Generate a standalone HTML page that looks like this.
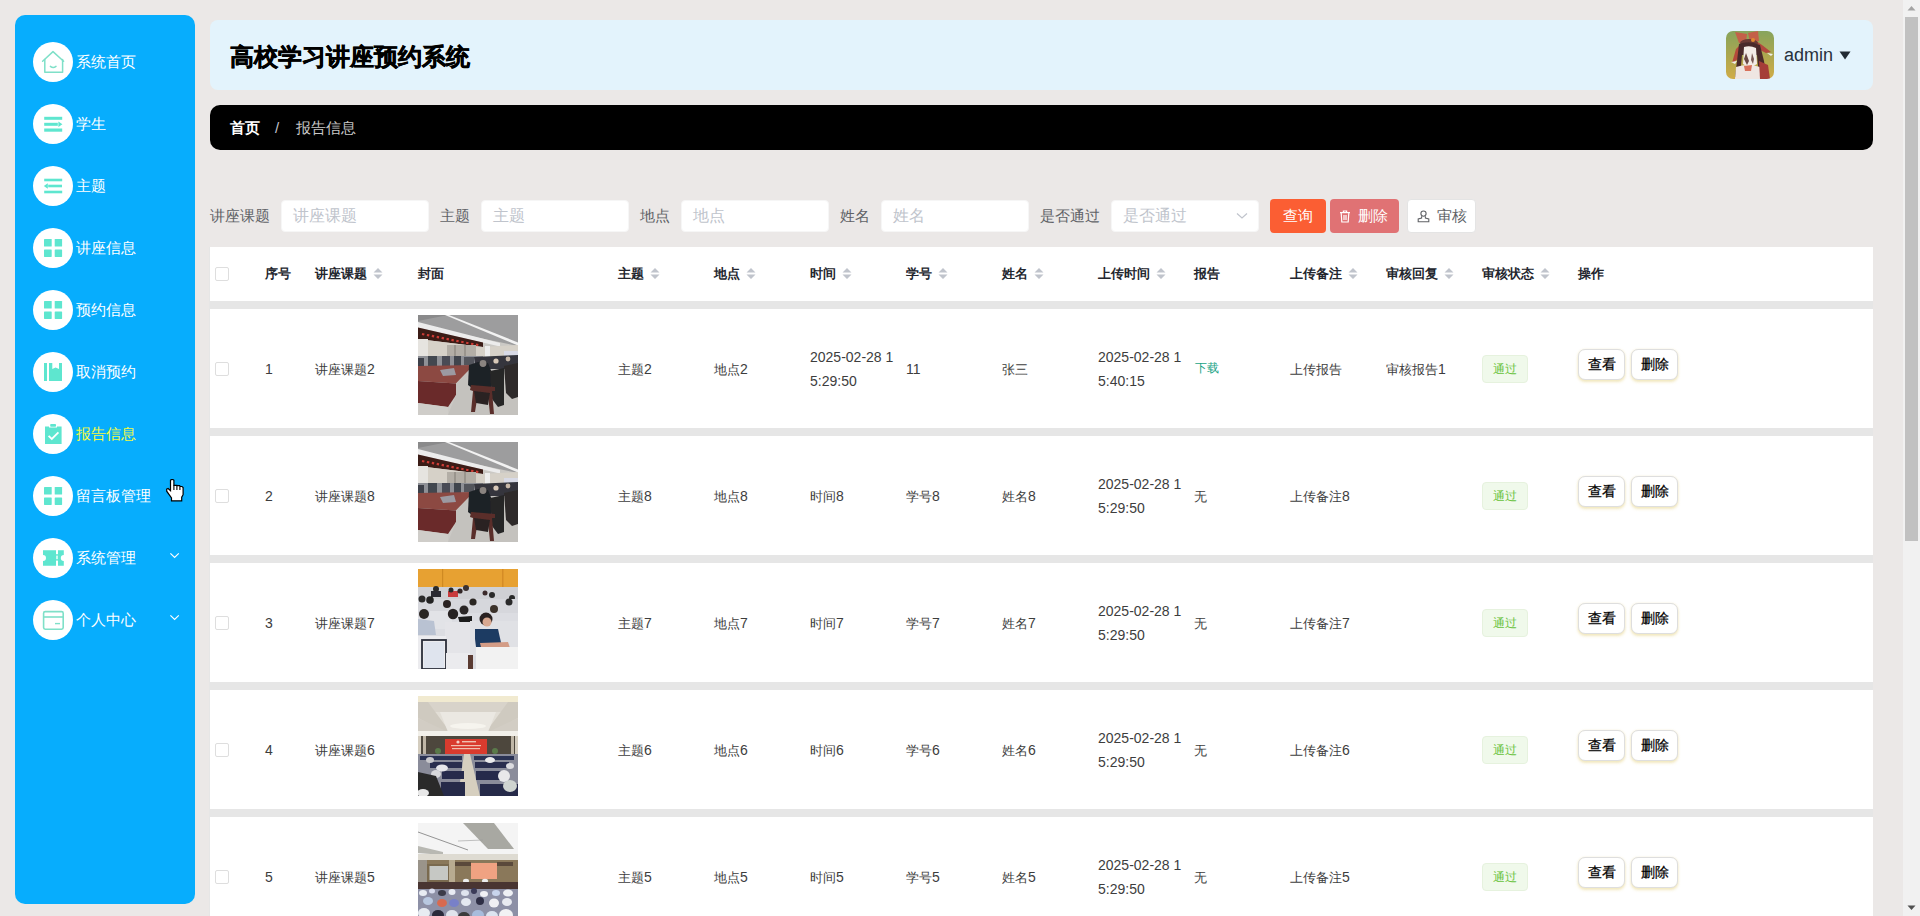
<!DOCTYPE html>
<html><head><meta charset="utf-8">
<style>
*{box-sizing:border-box;margin:0;padding:0}
html,body{width:1920px;height:916px;overflow:hidden}
body{background:#ebe8e7;font-family:"Liberation Sans",sans-serif;position:relative;color:#606266}
.abs{position:absolute}
#side{position:absolute;left:15px;top:15px;width:180px;height:889px;background:#07adfd;border-radius:10px}
.mi{position:absolute;left:18px;height:40px;width:160px}
.mi .ic{position:absolute;left:0;top:0;width:40px;height:40px;border-radius:50%;background:#fff}
.mi .ic svg{position:absolute;left:0;top:0}
.mi .tx{position:absolute;left:43px;top:0;line-height:40px;font-size:15px;color:#fff;white-space:nowrap}
.mi .tx.on{color:#f3fa3f}
.chev{position:absolute;left:136px;top:14px}
#hdr{position:absolute;left:210px;top:20px;width:1663px;height:70px;background:#e3f3fc;border-radius:8px}
#title{position:absolute;left:20px;top:1.5px;-webkit-text-stroke:0.5px #000;line-height:70px;font-size:24px;font-weight:bold;color:#000;white-space:nowrap}
#bc{position:absolute;left:210px;top:105px;width:1663px;height:45px;background:#000;border-radius:10px}
#bc span{position:absolute;top:0;line-height:45px;font-size:15px;white-space:nowrap}
.lbl{position:absolute;top:200px;line-height:32px;font-size:15px;color:#606266;white-space:nowrap}
.inp{position:absolute;top:200px;height:32px;width:148px;background:#fff;border:1px solid #f6f6f6;border-radius:4px}
.inp span{position:absolute;left:11px;top:0;line-height:29px;font-size:16px;color:#c0c4cc;white-space:nowrap}
.btn{position:absolute;top:199px;height:34px;border-radius:4px;font-size:15px;line-height:34px;white-space:nowrap;text-align:center}
#thead{position:absolute;left:210px;top:247px;width:1663px;height:54px;background:#fff}
.th{position:absolute;top:0;line-height:54px;font-size:13px;font-weight:bold;color:#23262e;white-space:nowrap}
.sort{display:inline-block;vertical-align:middle;margin-left:6px;width:10px;height:13px;position:relative;top:-1px}
.row{position:absolute;left:210px;width:1663px;height:119px;background:#fff}
.td{position:absolute;font-size:13px;color:#3d3d3d;white-space:nowrap}
.n{font-size:14px;line-height:1px}
.cb{position:absolute;left:5px;width:14px;height:14px;border:1px solid #dedede;border-radius:2px;background:#fff}
.tag{position:absolute;left:1272px;width:46px;height:28px;background:#f0f9eb;border:1px solid #e6f2de;border-radius:4px;color:#67c23a;font-size:12px;line-height:26px;text-align:center}
.ob{position:absolute;width:47px;height:31px;border:1px solid #dedede;border-radius:7px;background:#fff;font-size:14px;color:#000;text-align:center;line-height:29px;box-shadow:0 2px 3px rgba(238,224,170,.75),0 0 2px rgba(240,232,200,.6);-webkit-text-stroke:0.25px #000}
.thumb{position:absolute;left:208px;width:100px;height:100px;overflow:hidden}
#sb{position:absolute;left:1903px;top:0;width:17px;height:916px;background:#f1f1f1}
</style></head><body>
<svg width="0" height="0" style="position:absolute"><defs><filter id="bl" x="0" y="0" width="1" height="1"><feGaussianBlur stdDeviation="0.45"/></filter><filter id="bl2" x="0" y="0" width="1" height="1"><feGaussianBlur stdDeviation="0.7"/></filter></defs></svg>

<div id="side">
<div class="mi" style="top:27px"><div class="ic"><svg width="40" height="40" viewBox="0 0 40 40"><g fill="none" stroke="#7fe0c8" stroke-width="1.5" stroke-linejoin="round" stroke-linecap="round"><path d="M9.6 19.2 L20 9.6 L30.6 19.2"/><path d="M11.8 17.6 V30.2 H29.6 V17.6"/><path d="M17.4 24.4 Q20.2 26.6 23 24.4"/></g></svg></div><div class="tx">系统首页</div></div>
<div class="mi" style="top:89px"><div class="ic"><svg width="40" height="40" viewBox="0 0 40 40"><g fill="#5ee6cf"><rect x="11.2" y="12.8" width="18" height="3"/><rect x="11.2" y="18.8" width="13.6" height="3"/><path d="M25.4 17.6 L29.4 20.3 L25.4 23Z"/><rect x="11.2" y="24.5" width="18" height="3.2"/></g></svg></div><div class="tx">学生</div></div>
<div class="mi" style="top:151px"><div class="ic"><svg width="40" height="40" viewBox="0 0 40 40"><g fill="#5ee6cf"><rect x="11.2" y="12.7" width="18" height="2.6"/><path d="M10.8 20 L14.8 17.2 L14.8 22.8Z"/><rect x="15.2" y="18.7" width="13.8" height="2.6"/><rect x="11.2" y="24.7" width="18" height="2.6"/></g></svg></div><div class="tx">主题</div></div>
<div class="mi" style="top:213px"><div class="ic"><svg width="40" height="40" viewBox="0 0 40 40"><g fill="#5ee6cf"><rect x="11" y="11" width="7.7" height="7.5" rx=".6"/><rect x="21.7" y="11" width="7.4" height="7.5" rx=".6"/><rect x="11" y="21.5" width="7.7" height="7.4" rx=".6"/><rect x="21.7" y="21.5" width="7.4" height="7.4" rx=".6"/></g></svg></div><div class="tx">讲座信息</div></div>
<div class="mi" style="top:275px"><div class="ic"><svg width="40" height="40" viewBox="0 0 40 40"><g fill="#5ee6cf"><rect x="11" y="11" width="7.7" height="7.5" rx=".6"/><rect x="21.7" y="11" width="7.4" height="7.5" rx=".6"/><rect x="11" y="21.5" width="7.7" height="7.4" rx=".6"/><rect x="21.7" y="21.5" width="7.4" height="7.4" rx=".6"/></g></svg></div><div class="tx">预约信息</div></div>
<div class="mi" style="top:337px"><div class="ic"><svg width="40" height="40" viewBox="0 0 40 40"><g fill="#5ee6cf"><rect x="11" y="11" width="3" height="18"/><path d="M16 11 H19.3 V17 L22.6 15.6 L26 17 V11 H29 V29 H16Z"/></g></svg></div><div class="tx">取消预约</div></div>
<div class="mi" style="top:399px"><div class="ic"><svg width="40" height="40" viewBox="0 0 40 40"><g fill="#5ee6cf"><rect x="17.2" y="10" width="5.8" height="2.8" rx=".8"/><path d="M12 12.6 H16 V13.6 H24 V12.6 H28.6 V30 H12Z"/><path d="M15.6 21.8 L18.8 25 L25.4 18.4" fill="none" stroke="#fff" stroke-width="1.8"/></g></svg></div><div class="tx on">报告信息</div></div>
<div class="mi" style="top:461px"><div class="ic"><svg width="40" height="40" viewBox="0 0 40 40"><g fill="#5ee6cf"><rect x="11" y="11" width="7.7" height="7.5" rx=".6"/><rect x="21.7" y="11" width="7.4" height="7.5" rx=".6"/><rect x="11" y="21.5" width="7.7" height="7.4" rx=".6"/><rect x="21.7" y="21.5" width="7.4" height="7.4" rx=".6"/></g></svg></div><div class="tx">留言板管理</div></div>
<div class="mi" style="top:523px"><div class="ic"><svg width="40" height="40" viewBox="0 0 40 40"><g fill="#5ee6cf"><path d="M10 12.2 H30.8 V16.9 A3 3 0 0 0 30.8 22.9 V27.7 H10 V22.9 A3 3 0 0 0 10 16.9Z"/><rect x="23" y="12" width="2" height="4.2" fill="#fff"/><rect x="23" y="22.6" width="2" height="5.4" fill="#fff"/><rect x="23" y="17.6" width="2" height="3.6" fill="#fff" opacity=".7"/></g></svg></div><div class="tx">系统管理</div><svg class="chev" width="12" height="8" viewBox="0 0 12 8"><path d="M1.4 1.4 L5.6 5.4 L9.8 1.4" fill="none" stroke="#fff" stroke-width="1.2"/></svg></div>
<div class="mi" style="top:585px"><div class="ic"><svg width="40" height="40" viewBox="0 0 40 40"><g fill="none" stroke="#7fe0c8" stroke-width="1.6"><rect x="10.6" y="11.6" width="19.6" height="17.6" rx="1.6"/><path d="M10.6 17 H30.2"/><path d="M22 23.6 H27" stroke-width="1.4"/></g></svg></div><div class="tx">个人中心</div><svg class="chev" width="12" height="8" viewBox="0 0 12 8"><path d="M1.4 1.4 L5.6 5.4 L9.8 1.4" fill="none" stroke="#fff" stroke-width="1.2"/></svg></div>
</div>

<div id="hdr"><div id="title">高校学习讲座预约系统</div></div>
<div id="bc"><span style="left:20px;color:#fff;font-weight:bold">首页</span><span style="left:65px;color:#c0c4cc">/</span><span style="left:86px;color:#c8c8c8">报告信息</span></div>


<div class="abs" style="left:209px;top:247px;width:1664px;height:669px;background:#e6e6e6"></div>
<div class="lbl" style="left:210px">讲座课题</div><div class="inp" style="left:281px"><span>讲座课题</span></div>
<div class="lbl" style="left:440px">主题</div><div class="inp" style="left:481px"><span>主题</span></div>
<div class="lbl" style="left:640px">地点</div><div class="inp" style="left:681px"><span>地点</span></div>
<div class="lbl" style="left:840px">姓名</div><div class="inp" style="left:881px"><span>姓名</span></div>
<div class="lbl" style="left:1040px">是否通过</div><div class="inp" style="left:1111px"><span>是否通过</span><svg style="position:absolute;left:124px;top:11px" width="12" height="8" viewBox="0 0 12 8"><path d="M1 1.5 L6 6 L11 1.5" fill="none" stroke="#c0c4cc" stroke-width="1.2"/></svg></div>
<div class="btn" style="left:1270px;width:56px;background:#fb5e33;color:#fff">查询</div>
<div class="btn" style="left:1330px;width:69px;background:#e07274;color:#fff"><svg style="position:absolute;left:9px;top:11px" width="12" height="13" viewBox="0 0 12 13"><g fill="none" stroke="#fff" stroke-width="1.2"><path d="M1 2.6 H11"/><path d="M4.4 2.4 V1 H7.6 V2.4"/><path d="M2.2 3 L2.8 12 H9.2 L9.8 3"/><path d="M5 5 V10 M7 5 V10"/></g></svg><span style="position:absolute;left:28px">删除</span></div>
<div class="btn" style="left:1407px;width:69px;background:#fff;border:1px solid #e4e4e4;color:#606266;line-height:32px"><svg style="position:absolute;left:9px;top:10px" width="13" height="13" viewBox="0 0 13 13"><g fill="none" stroke="#606266" stroke-width="1.1"><circle cx="6.5" cy="3.6" r="2.6"/><path d="M4.6 6.2 L4.6 8 L1.2 9 V11.8 H11.8 V9 L8.4 8 V6.2"/></g></svg><span style="position:absolute;left:29px">审核</span></div>
<div id="thead"><div class="cb" style="top:20px"></div><div class="th" style="left:55px">序号</div><div class="th" style="left:105px">讲座课题<svg class="sort" viewBox="0 0 10 12"><path d="M5 0.5 L9.5 5 H0.5Z M5 11.5 L9.5 7 H0.5Z" fill="#c0c4cc"/></svg></div><div class="th" style="left:208px">封面</div><div class="th" style="left:408px">主题<svg class="sort" viewBox="0 0 10 12"><path d="M5 0.5 L9.5 5 H0.5Z M5 11.5 L9.5 7 H0.5Z" fill="#c0c4cc"/></svg></div><div class="th" style="left:504px">地点<svg class="sort" viewBox="0 0 10 12"><path d="M5 0.5 L9.5 5 H0.5Z M5 11.5 L9.5 7 H0.5Z" fill="#c0c4cc"/></svg></div><div class="th" style="left:600px">时间<svg class="sort" viewBox="0 0 10 12"><path d="M5 0.5 L9.5 5 H0.5Z M5 11.5 L9.5 7 H0.5Z" fill="#c0c4cc"/></svg></div><div class="th" style="left:696px">学号<svg class="sort" viewBox="0 0 10 12"><path d="M5 0.5 L9.5 5 H0.5Z M5 11.5 L9.5 7 H0.5Z" fill="#c0c4cc"/></svg></div><div class="th" style="left:792px">姓名<svg class="sort" viewBox="0 0 10 12"><path d="M5 0.5 L9.5 5 H0.5Z M5 11.5 L9.5 7 H0.5Z" fill="#c0c4cc"/></svg></div><div class="th" style="left:888px">上传时间<svg class="sort" viewBox="0 0 10 12"><path d="M5 0.5 L9.5 5 H0.5Z M5 11.5 L9.5 7 H0.5Z" fill="#c0c4cc"/></svg></div><div class="th" style="left:984px">报告</div><div class="th" style="left:1080px">上传备注<svg class="sort" viewBox="0 0 10 12"><path d="M5 0.5 L9.5 5 H0.5Z M5 11.5 L9.5 7 H0.5Z" fill="#c0c4cc"/></svg></div><div class="th" style="left:1176px">审核回复<svg class="sort" viewBox="0 0 10 12"><path d="M5 0.5 L9.5 5 H0.5Z M5 11.5 L9.5 7 H0.5Z" fill="#c0c4cc"/></svg></div><div class="th" style="left:1272px">审核状态<svg class="sort" viewBox="0 0 10 12"><path d="M5 0.5 L9.5 5 H0.5Z M5 11.5 L9.5 7 H0.5Z" fill="#c0c4cc"/></svg></div><div class="th" style="left:1368px">操作</div></div>
<div class="row" style="top:309px"><div class="cb" style="top:53px"></div><div class="td" style="left:55px;top:48.5px;line-height:24px"><span class="n">1</span></div><div class="td" style="left:105px;top:48.5px;line-height:24px">讲座课题<span class="n">2</span></div><div class="thumb" style="top:6px"><svg width="100" height="100" viewBox="0 0 100 100" preserveAspectRatio="none"><g filter="url(#bl)">
<rect width="100" height="100" fill="#cbc9c5"/>
<polygon points="0,0 100,0 100,31 0,10" fill="#9d9d9e"/>
<polygon points="0,0 30,0 0,6" fill="#8a8a8b"/>
<polygon points="27,0 31,0 100,27.5 100,30.5" fill="#f2f2f2"/>
<polygon points="0,7 82,28 82,31.5 0,12.5" fill="#ececec"/>
<polygon points="0,12.5 65,27.4 65,32 0,24" fill="#3b1a17"/>
<line x1="4" y1="19" x2="62" y2="30.5" stroke="#cc3c34" stroke-width="2.2" stroke-dasharray="2.4 2.6"/>
<polygon points="0,24 65,32 100,30 100,42 0,42" fill="#d6d1c8"/>
<rect x="0" y="24" width="10" height="34" fill="#e6e4e0"/>
<rect x="29" y="30" width="29" height="12" fill="#b3aea6"/>
<rect x="36" y="30" width="2" height="12" fill="#9a958d"/><rect x="46" y="30" width="2" height="12" fill="#9a958d"/>
<rect x="67" y="31" width="5" height="12" fill="#eeeeee"/>
<rect x="86" y="36" width="14" height="6" fill="#d8dae6"/>
<rect x="0" y="41" width="65" height="12" fill="#8e9096"/>
<rect x="0" y="43" width="6" height="10" fill="#3d414a"/>
<rect x="10" y="41" width="9" height="11" fill="#434750"/>
<rect x="24" y="41" width="8" height="10" fill="#484c55"/>
<rect x="36" y="41" width="7" height="10" fill="#40444d"/>
<rect x="46" y="42" width="10" height="8" fill="#52555c"/>
<polygon points="0,51 56,50 38,68.5 0,66" fill="#8c4842"/>
<polygon points="22,55 36,53 38,60 25,61" fill="#9c9aa2"/>
<polygon points="0,66 38,68.5 38,80 30,92 0,88" fill="#6a2b2a"/>
<polygon points="38,68.5 56,50 100,50 100,100 30,100 38,80" fill="#c4c2be"/>
<polygon points="56,42 100,40 100,54 58,54" fill="#34363c"/>
<circle cx="78" cy="46" r="2.6" fill="#d8c8b8"/><circle cx="90" cy="44" r="2.4" fill="#c8b8a8"/>
<polygon points="51,50 60,47 70,48 74,58 73,74 58,76 50,70" fill="#1f2126"/>
<circle cx="65" cy="48.5" r="3.4" fill="#8a8480"/>
<polygon points="72,56 86,53 86,90 80,92 74,84" fill="#272628"/>
<polygon points="86,51 100,48 100,82 94,84 88,78" fill="#2e2b2b"/>
<polygon points="53,70 77,72 77,76 74,76 76,99 72,99 70,80 60,78 57,97 53,97 55,76 52,75" fill="#5a2f2a"/>
<polygon points="56,76 72,78 70,90 58,88" fill="#2a2324"/>
<polygon points="0,88 30,92 30,100 0,100" fill="#cfcdc9"/>
</g></svg></div><div class="td" style="left:408px;top:48.5px;line-height:24px">主题<span class="n">2</span></div><div class="td" style="left:504px;top:48.5px;line-height:24px">地点<span class="n">2</span></div><div class="td" style="left:600px;top:36.5px;line-height:24px"><span class="n">2025-02-28 1</span><br><span class="n">5:29:50</span></div><div class="td" style="left:696px;top:48.5px;line-height:24px"><span class="n">11</span></div><div class="td" style="left:792px;top:48.5px;line-height:24px">张三</div><div class="td" style="left:888px;top:36.5px;line-height:24px"><span class="n">2025-02-28 1</span><br><span class="n">5:40:15</span></div><div class="td" style="left:985px;top:47px;line-height:24px;color:#19a385;font-size:12px">下载</div><div class="td" style="left:1080px;top:48.5px;line-height:24px">上传报告</div><div class="td" style="left:1176px;top:48.5px;line-height:24px">审核报告<span class="n">1</span></div><div class="tag" style="top:46px">通过</div><div class="ob" style="left:1368px;top:40px">查看</div><div class="ob" style="left:1421px;top:40px">删除</div></div>
<div class="row" style="top:436px"><div class="cb" style="top:53px"></div><div class="td" style="left:55px;top:48.5px;line-height:24px"><span class="n">2</span></div><div class="td" style="left:105px;top:48.5px;line-height:24px">讲座课题<span class="n">8</span></div><div class="thumb" style="top:6px"><svg width="100" height="100" viewBox="0 0 100 100" preserveAspectRatio="none"><g filter="url(#bl)">
<rect width="100" height="100" fill="#cbc9c5"/>
<polygon points="0,0 100,0 100,31 0,10" fill="#9d9d9e"/>
<polygon points="0,0 30,0 0,6" fill="#8a8a8b"/>
<polygon points="27,0 31,0 100,27.5 100,30.5" fill="#f2f2f2"/>
<polygon points="0,7 82,28 82,31.5 0,12.5" fill="#ececec"/>
<polygon points="0,12.5 65,27.4 65,32 0,24" fill="#3b1a17"/>
<line x1="4" y1="19" x2="62" y2="30.5" stroke="#cc3c34" stroke-width="2.2" stroke-dasharray="2.4 2.6"/>
<polygon points="0,24 65,32 100,30 100,42 0,42" fill="#d6d1c8"/>
<rect x="0" y="24" width="10" height="34" fill="#e6e4e0"/>
<rect x="29" y="30" width="29" height="12" fill="#b3aea6"/>
<rect x="36" y="30" width="2" height="12" fill="#9a958d"/><rect x="46" y="30" width="2" height="12" fill="#9a958d"/>
<rect x="67" y="31" width="5" height="12" fill="#eeeeee"/>
<rect x="86" y="36" width="14" height="6" fill="#d8dae6"/>
<rect x="0" y="41" width="65" height="12" fill="#8e9096"/>
<rect x="0" y="43" width="6" height="10" fill="#3d414a"/>
<rect x="10" y="41" width="9" height="11" fill="#434750"/>
<rect x="24" y="41" width="8" height="10" fill="#484c55"/>
<rect x="36" y="41" width="7" height="10" fill="#40444d"/>
<rect x="46" y="42" width="10" height="8" fill="#52555c"/>
<polygon points="0,51 56,50 38,68.5 0,66" fill="#8c4842"/>
<polygon points="22,55 36,53 38,60 25,61" fill="#9c9aa2"/>
<polygon points="0,66 38,68.5 38,80 30,92 0,88" fill="#6a2b2a"/>
<polygon points="38,68.5 56,50 100,50 100,100 30,100 38,80" fill="#c4c2be"/>
<polygon points="56,42 100,40 100,54 58,54" fill="#34363c"/>
<circle cx="78" cy="46" r="2.6" fill="#d8c8b8"/><circle cx="90" cy="44" r="2.4" fill="#c8b8a8"/>
<polygon points="51,50 60,47 70,48 74,58 73,74 58,76 50,70" fill="#1f2126"/>
<circle cx="65" cy="48.5" r="3.4" fill="#8a8480"/>
<polygon points="72,56 86,53 86,90 80,92 74,84" fill="#272628"/>
<polygon points="86,51 100,48 100,82 94,84 88,78" fill="#2e2b2b"/>
<polygon points="53,70 77,72 77,76 74,76 76,99 72,99 70,80 60,78 57,97 53,97 55,76 52,75" fill="#5a2f2a"/>
<polygon points="56,76 72,78 70,90 58,88" fill="#2a2324"/>
<polygon points="0,88 30,92 30,100 0,100" fill="#cfcdc9"/>
</g></svg></div><div class="td" style="left:408px;top:48.5px;line-height:24px">主题<span class="n">8</span></div><div class="td" style="left:504px;top:48.5px;line-height:24px">地点<span class="n">8</span></div><div class="td" style="left:600px;top:48.5px;line-height:24px">时间<span class="n">8</span></div><div class="td" style="left:696px;top:48.5px;line-height:24px">学号<span class="n">8</span></div><div class="td" style="left:792px;top:48.5px;line-height:24px">姓名<span class="n">8</span></div><div class="td" style="left:888px;top:36.5px;line-height:24px"><span class="n">2025-02-28 1</span><br><span class="n">5:29:50</span></div><div class="td" style="left:984px;top:48.5px;line-height:24px">无</div><div class="td" style="left:1080px;top:48.5px;line-height:24px">上传备注<span class="n">8</span></div><div class="tag" style="top:46px">通过</div><div class="ob" style="left:1368px;top:40px">查看</div><div class="ob" style="left:1421px;top:40px">删除</div></div>
<div class="row" style="top:563px"><div class="cb" style="top:53px"></div><div class="td" style="left:55px;top:48.5px;line-height:24px"><span class="n">3</span></div><div class="td" style="left:105px;top:48.5px;line-height:24px">讲座课题<span class="n">7</span></div><div class="thumb" style="top:6px"><svg width="100" height="100" viewBox="0 0 100 100" preserveAspectRatio="none"><g filter="url(#bl)">
<rect width="100" height="100" fill="#dcdde2"/>
<rect width="100" height="24" fill="#e7a132"/>
<rect x="24" y="0" width="1.2" height="20" fill="#cf8a24"/>
<rect x="84" y="0" width="1.5" height="25" fill="#d58c25"/>
<rect x="0" y="18" width="100" height="14" fill="#cfd0d4"/>
<circle cx="18" cy="20" r="3" fill="#2a2a2c"/><rect x="13" y="22" width="10" height="6" fill="#2b2b30"/>
<rect x="30" y="22" width="10" height="6" fill="#c83a3c"/><circle cx="33" cy="21" r="2.5" fill="#2a2a2a"/>
<circle cx="48" cy="19" r="3" fill="#3a3030"/><circle cx="42" cy="22" r="2.6" fill="#302828"/>
<circle cx="74" cy="26" r="3" fill="#2a2a2a"/><circle cx="67" cy="24" r="2.5" fill="#3a2a2a"/>
<circle cx="94" cy="29" r="3" fill="#2a2a2a"/>
<rect x="0" y="30" width="100" height="14" fill="#d6d7dc"/>
<circle cx="12" cy="31" r="3.8" fill="#222"/><circle cx="4" cy="30" r="3.5" fill="#2a2a2a"/>
<circle cx="29" cy="35" r="4" fill="#2a2420"/><circle cx="55" cy="33" r="3.6" fill="#2c2624"/>
<circle cx="76" cy="40" r="4" fill="#3a302a"/><circle cx="91" cy="33" r="3.5" fill="#2a2a2a"/>
<rect x="12" y="42" width="22" height="18" fill="#e2e3e7"/>
<circle cx="6" cy="45" r="5" fill="#2a2624"/>
<polygon points="0,50 16,52 18,66 0,66" fill="#b9c2d2"/>
<circle cx="35" cy="45" r="5.2" fill="#262220"/>
<circle cx="46" cy="41" r="4.5" fill="#2a2826"/>
<polygon points="40,48 54,47 54,54 42,55" fill="#1a1a1a"/>
<polygon points="27,55 40,54 40,58 28,60" fill="#2a2a2a"/>
<rect x="27" y="53" width="26" height="40" fill="#e4e4e8"/>
<rect x="52" y="52" width="48" height="35" fill="#e0e1e5"/>
<circle cx="68" cy="50" r="6.5" fill="#2a2220"/>
<circle cx="69" cy="53" r="4.5" fill="#d8a890"/>
<polygon points="57,60 80,60 84,78 76,80 58,78 57,70" fill="#1e3a62"/>
<polygon points="62,74 90,73 92,79 64,82" fill="#d39c86"/>
<rect x="0" y="67" width="28" height="33" fill="#ececef"/>
<rect x="4" y="71" width="24" height="29" fill="none" stroke="#2a2e3a" stroke-width="1.8"/>
<rect x="6" y="73" width="20" height="26" fill="#dfe4ee"/>
<rect x="28" y="84" width="24" height="16" fill="#ebebee"/>
<rect x="50" y="86" width="5" height="14" fill="#5a3a30"/>
<rect x="58" y="78" width="42" height="22" fill="#f2f2f2"/>
</g></svg></div><div class="td" style="left:408px;top:48.5px;line-height:24px">主题<span class="n">7</span></div><div class="td" style="left:504px;top:48.5px;line-height:24px">地点<span class="n">7</span></div><div class="td" style="left:600px;top:48.5px;line-height:24px">时间<span class="n">7</span></div><div class="td" style="left:696px;top:48.5px;line-height:24px">学号<span class="n">7</span></div><div class="td" style="left:792px;top:48.5px;line-height:24px">姓名<span class="n">7</span></div><div class="td" style="left:888px;top:36.5px;line-height:24px"><span class="n">2025-02-28 1</span><br><span class="n">5:29:50</span></div><div class="td" style="left:984px;top:48.5px;line-height:24px">无</div><div class="td" style="left:1080px;top:48.5px;line-height:24px">上传备注<span class="n">7</span></div><div class="tag" style="top:46px">通过</div><div class="ob" style="left:1368px;top:40px">查看</div><div class="ob" style="left:1421px;top:40px">删除</div></div>
<div class="row" style="top:690px"><div class="cb" style="top:53px"></div><div class="td" style="left:55px;top:48.5px;line-height:24px"><span class="n">4</span></div><div class="td" style="left:105px;top:48.5px;line-height:24px">讲座课题<span class="n">6</span></div><div class="thumb" style="top:6px"><svg width="100" height="100" viewBox="0 0 100 100" preserveAspectRatio="none"><g filter="url(#bl)">
<rect width="100" height="100" fill="#e2ded6"/>
<rect width="100" height="6" fill="#f1ead0"/>
<polygon points="0,6 100,6 100,16 0,16" fill="#d8d3ca"/>
<polygon points="0,6 10,6 32,36 26,36 0,22" fill="#cfcac0"/>
<polygon points="100,6 90,6 68,36 74,36 100,22" fill="#cfcac0"/>
<polygon points="22,16 78,16 70,36 30,36" fill="#ebe8e2"/>
<ellipse cx="50" cy="30" rx="18" ry="3" fill="#f6f4ee"/>
<polygon points="0,22 30,36 0,36" fill="#d2cdc4"/>
<polygon points="100,22 70,36 100,36" fill="#d2cdc4"/>
<rect x="0" y="35" width="100" height="6" fill="#f2f0ea"/>
<rect x="0" y="40" width="100" height="19" fill="#4e463e"/>
<rect x="0" y="40" width="3" height="20" fill="#d4cdbf"/><rect x="5" y="40" width="3" height="20" fill="#bfb6a6"/>
<rect x="93" y="40" width="3" height="20" fill="#bfb6a6"/><rect x="97" y="40" width="3" height="20" fill="#d4cdbf"/>
<rect x="27" y="43" width="42" height="15" fill="#d93b2f"/>
<circle cx="40" cy="46" r="1.6" fill="#f4d0c8"/>
<rect x="44" y="45" width="14" height="1.4" fill="#f0c0b0"/>
<rect x="33" y="49" width="30" height="1.2" fill="#f0c0b0"/>
<rect x="34" y="52" width="28" height="1.2" fill="#f0c0b0"/>
<circle cx="20" cy="55" r="3" fill="#5a7a4a"/><circle cx="77" cy="55" r="3" fill="#5a7a4a"/>
<rect x="0" y="58" width="100" height="42" fill="#8a8c9a"/>
<polygon points="46,58 52,58 62,100 40,100" fill="#d6cfbf"/>
<rect x="2" y="60" width="42" height="4" fill="#2c3052"/>
<rect x="56" y="60" width="40" height="4" fill="#2c3052"/>
<rect x="12" y="66" width="32" height="6" fill="#2a2e50"/>
<rect x="57" y="66" width="34" height="6" fill="#2a2e50"/>
<rect x="24" y="75" width="22" height="8" fill="#282c4c"/>
<rect x="58" y="75" width="28" height="9" fill="#282c4c"/>
<rect x="23" y="86" width="24" height="14" fill="#262a48"/>
<rect x="62" y="88" width="38" height="12" fill="#262a48"/>
<ellipse cx="24" cy="72" rx="6" ry="3.5" fill="#e6e6ea"/><ellipse cx="72" cy="64" rx="5" ry="3" fill="#eaeaec"/>
<ellipse cx="18" cy="78" rx="5" ry="4" fill="#d8d8dc"/><ellipse cx="86" cy="80" rx="6" ry="6" fill="#e8e8ea"/>
<ellipse cx="12" cy="64" rx="4" ry="3" fill="#c8c8cc"/><ellipse cx="92" cy="70" rx="4" ry="3" fill="#dcdce0"/>
<polygon points="0,76 18,80 26,100 0,100" fill="#2a2a2c"/>
<ellipse cx="5" cy="97" rx="6" ry="4" fill="#e8e8e8"/>
<ellipse cx="92" cy="90" rx="7" ry="6" fill="#cfd4d0"/>
</g></svg></div><div class="td" style="left:408px;top:48.5px;line-height:24px">主题<span class="n">6</span></div><div class="td" style="left:504px;top:48.5px;line-height:24px">地点<span class="n">6</span></div><div class="td" style="left:600px;top:48.5px;line-height:24px">时间<span class="n">6</span></div><div class="td" style="left:696px;top:48.5px;line-height:24px">学号<span class="n">6</span></div><div class="td" style="left:792px;top:48.5px;line-height:24px">姓名<span class="n">6</span></div><div class="td" style="left:888px;top:36.5px;line-height:24px"><span class="n">2025-02-28 1</span><br><span class="n">5:29:50</span></div><div class="td" style="left:984px;top:48.5px;line-height:24px">无</div><div class="td" style="left:1080px;top:48.5px;line-height:24px">上传备注<span class="n">6</span></div><div class="tag" style="top:46px">通过</div><div class="ob" style="left:1368px;top:40px">查看</div><div class="ob" style="left:1421px;top:40px">删除</div></div>
<div class="row" style="top:817px"><div class="cb" style="top:53px"></div><div class="td" style="left:55px;top:48.5px;line-height:24px"><span class="n">5</span></div><div class="td" style="left:105px;top:48.5px;line-height:24px">讲座课题<span class="n">5</span></div><div class="thumb" style="top:6px"><svg width="100" height="100" viewBox="0 0 100 100" preserveAspectRatio="none"><g filter="url(#bl)">
<rect width="100" height="100" fill="#f4f4f4"/>
<polygon points="45,0 76,0 96,26 70,26" fill="#a8a8a2"/>
<polygon points="0,23 25,29 25,32 0,30" fill="#b8b8b2"/>
<line x1="0" y1="9" x2="50" y2="27" stroke="#7a7a7a" stroke-width=".8"/>
<line x1="40" y1="18" x2="65" y2="17" stroke="#9a9a9a" stroke-width=".6"/>
<rect x="0" y="31" width="100" height="6" fill="#dedbd2"/>
<rect x="0" y="37" width="100" height="23" fill="#8a785a"/>
<rect x="0" y="37" width="9" height="23" fill="#9a948a"/>
<rect x="9" y="41" width="23" height="19" fill="#7a6a50"/>
<rect x="11.5" y="43" width="18.5" height="14" fill="#c6c8c4"/>
<rect x="31" y="37" width="6" height="23" fill="#b8ab90"/>
<rect x="37" y="39" width="16" height="4" fill="#5a4a3a"/>
<rect x="53" y="40" width="26" height="16" fill="#f0a282"/>
<rect x="79" y="39" width="16" height="4" fill="#5a4a3a"/>
<ellipse cx="48" cy="58" rx="3" ry="2.2" fill="#eeeeee"/><ellipse cx="67" cy="58" rx="3" ry="2.2" fill="#eeeeee"/>
<rect x="0" y="59" width="100" height="8" fill="#4a3632"/>
<rect x="0" y="66" width="100" height="34" fill="#8d90a6"/>
<ellipse cx="5" cy="70" rx="4" ry="3" fill="#e8ecf2"/><ellipse cx="14" cy="68" rx="3" ry="2.5" fill="#d8dcee"/>
<ellipse cx="24" cy="70" rx="4" ry="3" fill="#3a3a4a"/><ellipse cx="34" cy="69" rx="3.5" ry="3" fill="#e8ecf4"/>
<ellipse cx="47" cy="70" rx="4" ry="3" fill="#dfe4ee"/><ellipse cx="56" cy="68" rx="3" ry="3" fill="#3a3a58"/>
<ellipse cx="66" cy="71" rx="4" ry="3" fill="#f0f0f4"/><ellipse cx="78" cy="70" rx="4" ry="3" fill="#c8d4ec"/>
<ellipse cx="90" cy="70" rx="5" ry="3.5" fill="#eef0f4"/>
<ellipse cx="10" cy="78" rx="5" ry="4" fill="#b8c8e0"/><ellipse cx="24" cy="80" rx="5" ry="4" fill="#d86a50"/>
<ellipse cx="36" cy="80" rx="5" ry="4" fill="#7880c8"/><ellipse cx="48" cy="79" rx="5" ry="4" fill="#e4e8f0"/>
<ellipse cx="62" cy="78" rx="4" ry="4" fill="#2e2e44"/><ellipse cx="76" cy="80" rx="5" ry="4.5" fill="#f0f0f4"/>
<ellipse cx="89" cy="79" rx="5" ry="4" fill="#e8eaf0"/>
<ellipse cx="6" cy="90" rx="6" ry="5" fill="#e8ecf2"/><ellipse cx="20" cy="92" rx="6" ry="5" fill="#2a2a3a"/>
<ellipse cx="34" cy="92" rx="6" ry="5" fill="#e0e4ec"/><ellipse cx="46" cy="94" rx="6" ry="5" fill="#3a3a3a"/>
<ellipse cx="60" cy="92" rx="6" ry="5" fill="#a8bcdc"/><ellipse cx="74" cy="93" rx="6" ry="5" fill="#dce4f0"/>
<ellipse cx="88" cy="92" rx="7" ry="6" fill="#f2f2f4"/>
</g></svg></div><div class="td" style="left:408px;top:48.5px;line-height:24px">主题<span class="n">5</span></div><div class="td" style="left:504px;top:48.5px;line-height:24px">地点<span class="n">5</span></div><div class="td" style="left:600px;top:48.5px;line-height:24px">时间<span class="n">5</span></div><div class="td" style="left:696px;top:48.5px;line-height:24px">学号<span class="n">5</span></div><div class="td" style="left:792px;top:48.5px;line-height:24px">姓名<span class="n">5</span></div><div class="td" style="left:888px;top:36.5px;line-height:24px"><span class="n">2025-02-28 1</span><br><span class="n">5:29:50</span></div><div class="td" style="left:984px;top:48.5px;line-height:24px">无</div><div class="td" style="left:1080px;top:48.5px;line-height:24px">上传备注<span class="n">5</span></div><div class="tag" style="top:46px">通过</div><div class="ob" style="left:1368px;top:40px">查看</div><div class="ob" style="left:1421px;top:40px">删除</div></div>

<div class="abs" style="left:1726px;top:31px;width:48px;height:48px;border-radius:7px;overflow:hidden"><svg width="48" height="48" viewBox="0 0 48 48"><g filter="url(#bl2)">
<defs><linearGradient id="avg" x1="0" y1="0" x2="0" y2="1"><stop offset="0" stop-color="#87a45c"/><stop offset=".45" stop-color="#a8a650"/><stop offset="1" stop-color="#d0ac48"/></linearGradient></defs>
<rect width="48" height="48" fill="url(#avg)"/>
<path d="M9 1 L21 3 L20 11 L13 12 Z" fill="#c4604a"/>
<path d="M22 2 L32 0 L33 10 L24 11 Z" fill="#c4604a"/>
<path d="M30 10 L36 14 L45 21 L40 22 L32 18 Z" fill="#b24a3c"/>
<path d="M10 18 L14 14 L12 28 L6 32 Z" fill="#b54a3a"/>
<ellipse cx="23" cy="12" rx="9" ry="4" fill="#6a3a34"/>
<circle cx="27" cy="9" r="2" fill="#e08a30"/>
<path d="M13 13 Q23 9 34 14 L38 30 L40 44 L33 46 L31 24 L16 24 L14 46 L9 46 L11 30 Z" fill="#4a2c2a"/>
<path d="M18 16 Q24 14 30 17 L31 33 Q24 38 17 33 Z" fill="#f3ece6"/>
<path d="M20 22 L23 30 L21 34 L18 28Z" fill="#6a4a44"/>
<path d="M26 22 L28 28 L27 33 L25 29Z" fill="#7a5a54"/>
<path d="M10 36 Q22 32 34 36 L35 48 H9 Z" fill="#efe6e2"/>
<path d="M18 35 L26 34 L25 40 L19 40Z" fill="#d8705a"/>
<path d="M33 30 L42 34 L44 48 L34 48 Z" fill="#a53e38"/>
<path d="M41 22 L47 23 L45 25Z" fill="#f0eee8"/>
<path d="M5 31 L11 30 L9 33Z" fill="#f0eee8"/>
</g></svg></div>
<div class="abs" style="left:1784px;top:42.5px;font-size:18px;line-height:24px;color:#28313c">admin</div>
<svg class="abs" style="left:1839px;top:51px" width="12" height="9" viewBox="0 0 12 9"><path d="M0.5 0.5 H11.5 L6 8.5Z" fill="#222a33"/></svg>
<svg class="abs" style="left:166px;top:479px" width="18" height="23" viewBox="0 0 18 23"><path d="M4.5 1.2 Q6.2 -0.2 7.9 1.2 V6.3 H10.9 L11.1 6.7 H13.7 L14.1 7.5 H16 L17.1 8.5 V15.7 L15.7 18.1 V21.8 H5.5 V19 L0.7 12.2 V10.1 L2.1 9.5 L4.5 11.7 Z" fill="#fff" stroke="#000" stroke-width="1.2" stroke-linejoin="miter"/><path d="M7.9 6.3 V11 M10.9 6.7 V11 M13.9 7.5 V11" stroke="#000" stroke-width="1.1"/></svg>
<div id="sb"><svg class="abs" style="left:0;top:0" width="17" height="916" viewBox="0 0 17 916"><path d="M4.5 10.5 L8.5 6 L12.5 10.5Z" fill="#a3a3a3"/><rect x="2" y="17" width="13" height="524" fill="#c1c1c1"/><path d="M4.5 905.5 L8.5 910 L12.5 905.5Z" fill="#505050"/></svg></div>
</body></html>
